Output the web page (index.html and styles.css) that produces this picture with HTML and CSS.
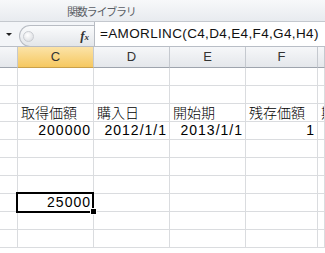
FILE: index.html
```html
<!DOCTYPE html>
<html lang="ja">
<head>
    <meta charset="UTF-8">
    <title>AMORLINC</title>
    <link rel="stylesheet" href="styles.css">
</head>
<body>

    <div class="ribbon">
        <span class="group-label">関数ライブラリ</span>
    </div>

    <div class="formula-bar">
        <div class="name-box"><span class="arrow"></span></div>
        <div class="fx-pill">
            <span class="knob"></span>
            <span class="fx"><i>f</i><small>x</small></span>
        </div>
        <div class="formula">=AMORLINC(C4,D4,E4,F4,G4,H4)</div>
    </div>

    <div class="sheet">
        <div class="col-head"></div>
        <div class="col-head selected">C</div>
        <div class="col-head">D</div>
        <div class="col-head">E</div>
        <div class="col-head">F</div>
        <div class="col-head"></div>

        <div class="cell"></div><div class="cell"></div><div class="cell"></div><div class="cell"></div><div class="cell"></div><div class="cell"></div>
        <div class="cell"></div><div class="cell"></div><div class="cell"></div><div class="cell"></div><div class="cell"></div><div class="cell"></div>

        <div class="cell"></div>
        <div class="cell text">取得価額</div>
        <div class="cell text">購入日</div>
        <div class="cell text">開始期</div>
        <div class="cell text">残存価額</div>
        <div class="cell text edge">期</div>

        <div class="cell"></div>
        <div class="cell num">200000</div>
        <div class="cell num">2012/1/1</div>
        <div class="cell num">2013/1/1</div>
        <div class="cell num">1</div>
        <div class="cell"></div>

        <div class="cell"></div><div class="cell"></div><div class="cell"></div><div class="cell"></div><div class="cell"></div><div class="cell"></div>
        <div class="cell"></div><div class="cell"></div><div class="cell"></div><div class="cell"></div><div class="cell"></div><div class="cell"></div>
        <div class="cell"></div><div class="cell"></div><div class="cell"></div><div class="cell"></div><div class="cell"></div><div class="cell"></div>

        <div class="cell"></div>
        <div class="cell num active">25000</div>
        <div class="cell"></div><div class="cell"></div><div class="cell"></div><div class="cell"></div>

        <div class="cell"></div><div class="cell"></div><div class="cell"></div><div class="cell"></div><div class="cell"></div><div class="cell"></div>
        <div class="cell"></div><div class="cell"></div><div class="cell"></div><div class="cell"></div><div class="cell"></div><div class="cell"></div>
    </div>

</body>
</html>
```

FILE: styles.css
```css
body {
    margin: 0;
    width: 325px;
    height: 253px;
    overflow: hidden;
    background-color: #fff;
    font-family: "Liberation Sans", "Noto Sans CJK JP", sans-serif;
}

/* ribbon strip with the group caption */
.ribbon {
    height: 22px;
    background: linear-gradient(#f7f8fa, #e8ebef);
    border-bottom: 1px solid #c4c8ce;
    box-sizing: border-box;
    padding-left: 67px;
}

.group-label {
    display: block;
    padding-top: 4px;
    font-family: "Noto Sans CJK JP", sans-serif;
    font-size: 11px;
    line-height: 14px;
    color: #5b5f66;
    letter-spacing: -1.2px;
}

/* formula bar */
.formula-bar {
    display: flex;
    height: 25px;
    background-color: #f3f5f8;
    border-bottom: 1px solid #b9bec6;
    box-sizing: border-box;
}

.name-box {
    width: 19px;
    display: flex;
    align-items: center;
    padding-left: 6px;
    box-sizing: border-box;
}

.arrow {
    width: 0;
    height: 0;
    border-left: 3px solid transparent;
    border-right: 3px solid transparent;
    border-top: 3px solid #222;
    margin-top: 1px;
}

.fx-pill {
    width: 75px;
    margin-top: 3px;
    height: 22px;
    border: 1px solid #b8bcc3;
    border-right: none;
    border-radius: 11px 0 0 11px;
    background: linear-gradient(#fafbfc, #e3e6ea);
    box-sizing: border-box;
    display: flex;
    align-items: center;
    justify-content: space-between;
    padding: 0 5px 0 3px;
}

.knob {
    width: 9px;
    height: 9px;
    border-radius: 50%;
    border: 1px solid #c9ccd1;
    background: radial-gradient(circle at 40% 35%, #fff, #d5d8dd);
}

.fx {
    font-family: "Liberation Serif", serif;
    font-weight: bold;
    color: #333;
    font-size: 13px;
    line-height: 14px;
}

.fx small {
    font-size: 9px;
    font-style: italic;
}

.formula {
    flex: 1;
    background-color: #fff;
    border-left: 1px solid #b8bcc3;
    padding-left: 5px;
    font-size: 13.5px;
    letter-spacing: 0.35px;
    line-height: 23px;
    color: #111;
    white-space: nowrap;
    overflow: hidden;
}

/* worksheet grid */
.sheet {
    display: grid;
    grid-template-columns: 18px 76px 76px 76px 72px 1fr;
    grid-auto-rows: 18px;
    grid-template-rows: 21px;
}

.col-head {
    background: linear-gradient(#f6f7f9, #e4e7eb);
    border-right: 1px solid #c5c9cf;
    border-bottom: 1px solid #9ea4ad;
    box-sizing: border-box;
    text-align: center;
    font-size: 13px;
    line-height: 20px;
    color: #333;
}

.col-head.selected {
    background: linear-gradient(#fbe3a8, #f6c860);
    border-bottom-color: #c9a04a;
}

.cell {
    border-right: 1px solid #dadcdf;
    border-bottom: 1px solid #dadcdf;
    box-sizing: border-box;
    font-size: 14px;
    line-height: 17px;
    color: #000;
    white-space: nowrap;
}

.cell.text {
    padding-left: 3px;
    font-family: "Noto Sans CJK JP", sans-serif;
    font-weight: 300;
}

.cell.edge {
    overflow: hidden;
}

.cell.num {
    text-align: right;
    padding-right: 2px;
    letter-spacing: 1px;
    font-weight: 300;
}

.cell.active {
    position: relative;
}

.cell.active::after {
    content: "";
    position: absolute;
    left: -2px;
    top: -2px;
    right: -1px;
    bottom: -2px;
    border: 2px solid #000;
}

.cell.active::before {
    content: "";
    position: absolute;
    right: -4px;
    bottom: -4px;
    width: 5px;
    height: 5px;
    background-color: #000;
    border: 1px solid #fff;
    z-index: 1;
}
```
